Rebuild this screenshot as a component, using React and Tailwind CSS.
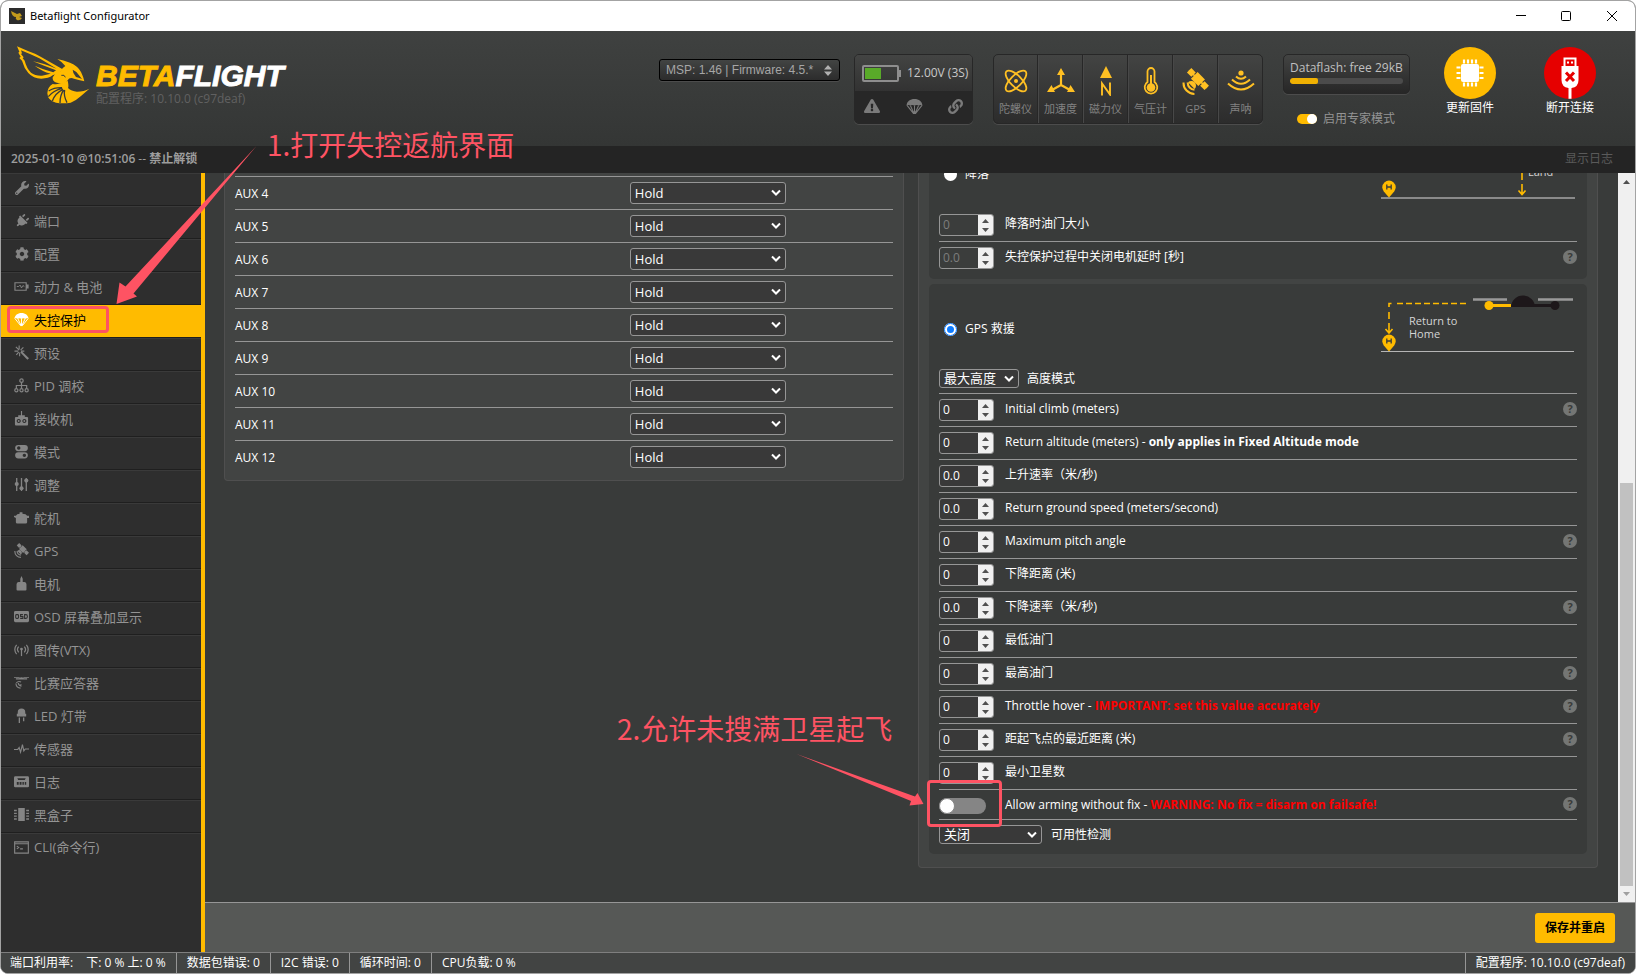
import React from 'react';
import { FaWrench, FaPlug, FaCog, FaExclamationTriangle, FaLink } from 'react-icons/fa';

const G = ({ children, className = 'size-[15px]', box = '0 0 16 16' }) => (
  <svg viewBox={box} className={className} fill="currentColor" aria-hidden="true">{children}</svg>
);

const Parachute = ({ className }) => (
  <G className={className}>
    <path d="M0.5 7.2C0.7 3.4 3.9 1 8 1s7.3 2.4 7.5 6.2c-.8-.7-2.8-.7-3.6.2-.9-1-2.9-1-3.9 0-1-1-3-1-3.9 0-.8-.9-2.8-.9-3.6-.2z" />
    <path d="M1 7l6 7.5h2L15 7M4.2 7.3L7.3 14M11.8 7.3L8.7 14M8 7.4V14" fill="none" stroke="currentColor" strokeWidth="1" />
    <path d="M6.2 12.6h3.6L8.6 15H7.4z" />
  </G>
);

const Satellite = ({ className }) => (
  <G className={className} box="0 0 26 26">
    <g transform="rotate(45 15 11)">
      <rect x="10" y="6" width="10" height="9" />
      <rect x="3" y="7.5" width="6" height="6" />
      <rect x="21" y="7.5" width="6" height="6" />
      <rect x="3" y="9.700" width="24" height="1.600" />
      <path d="M10.500 19.500a4.500 4.500 0 0 1 9 0z" />
    </g>
    <path d="M1.500 14a10.500 10.500 0 0 0 10.500 11M5.500 14a6.800 6.800 0 0 0 6.500 7" fill="none" stroke="currentColor" strokeWidth="2" />
  </G>
);

const icons = {
  wrench: <FaWrench className="size-[14px]" />,
  plug: <FaPlug className="size-[14px] rotate-45" />,
  cog: <FaCog className="size-[14px]" />,
  battery: <G><path d="M1 4h12v8H1zM14 6.5h1v3h-1z" fill="none" stroke="currentColor" strokeWidth="1.2" /><path d="M3 8h2l1.5-1.5L8 9.5 9.5 7 11 8" fill="none" stroke="currentColor" /></G>,
  chute: <Parachute className="size-[15px]" />,
  magic: <G><path d="M8 6.500l8 7.500-1.800 1.800L6.800 8z" /><path d="M5.500 5.500L2 2M5.500 4.500V.5M7 5.500L10 2.500M7.500 6.500H11M4.500 6.500H.5M5 7.500L2.500 10.500M6 8v4" fill="none" stroke="currentColor" strokeWidth="1.200" /></G>,
  tree: <G><g fill="none" stroke="currentColor" strokeWidth="1.3"><circle cx="8" cy="2.8" r="1.8" /><circle cx="2.5" cy="13" r="1.7" /><circle cx="8" cy="13" r="1.7" /><circle cx="13.5" cy="13" r="1.7" /><path d="M8 4.6v6.7M2.5 11.3V8h11v3.3" /></g></G>,
  receiver: <G><path fillRule="evenodd" d="M2 6.5h12q1 0 1 1V14q0 1.500-1 1.500H2q-1 0-1-1.500V7.500q0-1 1-1zM5 8.500a2.200 2.200 0 1 0 .1 0zM11 8.500a2.200 2.200 0 1 0 .1 0z" /><path d="M7.400 0h1.200v6H7.400zM4.500 4.500h7V7h-7z" /><circle cx="5" cy="10.700" r="1" /><circle cx="11" cy="10.700" r="1" /></G>,
  toggles: <G><path fillRule="evenodd" d="M4.500 1h7a3.300 3.300 0 0 1 0 6.600h-7a3.300 3.300 0 0 1 0-6.600zM5 2.500a1.800 1.800 0 1 0 .1 0zM4.500 8.800h7a3.300 3.300 0 0 1 0 6.600h-7a3.300 3.300 0 0 1 0-6.600zM11 10.300a1.800 1.800 0 1 0 .1 0z" /></G>,
  sliders: <G><path d="M2.200 1h1.400v14H2.200zM7.300 1h1.400v14H7.300zM12.400 1h1.400v14h-1.400z" /><circle cx="2.900" cy="7.500" r="2.200" /><circle cx="8" cy="12" r="2.200" /><circle cx="13.100" cy="3.800" r="2.200" /></G>,
  servo: <G><path d="M6 2.500h3V4q4 .3 5 2h2v2.500h-2V13q0 1.500-1.500 1.500h-9Q2 14.500 2 13V8.500L0 7.500V6h2q1-1.700 4-2z" /></G>,
  sat: <Satellite className="size-[15px]" />,
  motor: <G><path d="M8 0l1.300 3v3.500h2q2 .3 2 2.500v5.500q0 1-1 1H3.700q-1 0-1-1V9q0-2.200 2-2.500h2V3z" /></G>,
  osd: <svg viewBox="0 0 16 16" className="size-[15px]" aria-hidden="true"><rect x="0" y="2" width="16" height="12" rx="1.500" fill="currentColor" /><g fill="none" stroke="#2e2e2e" strokeWidth="1.100"><rect x="1.800" y="6" width="3" height="4" rx="1" /><path d="M9.500 6H7v2h2.500v2H6.600M11.300 6h1.500q1.500 0 1.500 2t-1.500 2h-1.500z" /></g></svg>,
  vtx: <G><g fill="none" stroke="currentColor" strokeWidth="1.300"><path d="M2.800 3a7.500 7.500 0 0 0 0 10M13.200 3a7.500 7.500 0 0 1 0 10M5 5a4.500 4.500 0 0 0 0 6M11 5a4.500 4.500 0 0 1 0 6" /><path d="M8 8v7" /></g><circle cx="8" cy="7.500" r="1.500" /></G>,
  transponder: <G><path d="M0 2h6v1H0zM10 2h6v1h-6zM5.500 3.500Q8 1.500 10.500 3.500H14v1.300H2V3.500z" /><path d="M7.500 7.500a4 4 0 0 0-5 1M8 10.500a2.500 2.500 0 0 0-2 .500M2 9q.500 4.500 5 5M4.500 8.500q.500 3 3.500 3.500" fill="none" stroke="currentColor" strokeWidth="1.200" /></G>,
  led: <G><path d="M4 6V4.500A4 4 0 0 1 12 4.500V6h1v3H3V6zM5 10h1.400v6H5zM9.600 10H11v4H9.600z" /></G>,
  pulse: <G><path d="M0 9h4l1.500-2L7 12 9 4l1.500 6.500L12 8.500h4" fill="none" stroke="currentColor" strokeWidth="1.200" /></G>,
  log: <G><path fillRule="evenodd" d="M1.500 2.500h13q1.500 0 1.500 1.500v9q0 1.200-1.500 1.200h-13Q0 14.200 0 13V4q0-1.500 1.500-1.500zM3.500 4.500l1 2h7l1-2zM3 8.500v3h2v-3zM6 8.500v3h2v-3zM9 8.500v3h1.500v-3zM11.500 8.500v3H13v-3z" /></G>,
  blackbox: <G><path d="M4.500 1h7v14h-7zM0 3h3v1.500H0zM0 6h3v1.500H0zM0 9h3v1.500H0zM0 12h3v1.500H0zM13 3h3v1.500h-3zM13 6h3v1.500h-3zM13 9h3v1.500h-3zM13 12h3v1.500h-3z" /></G>,
  cli: <G><path d="M.7 2h14.600v12H.7zM.7 4h14.600M3 6.500l2 1.500-2 1.500M6.500 9.500h3" fill="none" stroke="currentColor" strokeWidth="1.200" /></G>,
};

const nav = [
  ['设置', 'wrench'], ['端口', 'plug'], ['配置', 'cog'], ['动力 & 电池', 'battery'], ['失控保护', 'chute'],
  ['预设', 'magic'], ['PID 调校', 'tree'], ['接收机', 'receiver'], ['模式', 'toggles'], ['调整', 'sliders'],
  ['舵机', 'servo'], ['GPS', 'sat'], ['电机', 'motor'], ['OSD 屏幕叠加显示', 'osd'], ['图传(VTX)', 'vtx'],
  ['比赛应答器', 'transponder'], ['LED 灯带', 'led'], ['传感器', 'pulse'], ['日志', 'log'], ['黑盒子', 'blackbox'],
  ['CLI(命令行)', 'cli'],
];

const sensors = [
  ['陀螺仪', <svg viewBox="0 0 26 26" className="size-[26px]" aria-hidden="true"><g fill="none" stroke="#ffc023" strokeWidth="1.800"><ellipse cx="13" cy="13" rx="13.500" ry="5.600" transform="rotate(45 13 13)" /><ellipse cx="13" cy="13" rx="13.500" ry="5.600" transform="rotate(-45 13 13)" /></g><circle cx="13" cy="13" r="2" fill="#ffc023" /></svg>],
  ['加速度', <svg viewBox="0 0 28 26" className="h-[26px] w-[28px]" fill="#ffc023" aria-hidden="true"><path d="M14 4v13M14 17L4 22.500M14 17l10 5.500" stroke="#ffc023" strokeWidth="2.200" /><path d="M14 0l4 7h-8zM0 24l4.500-7 3.500 7zM28 24l-4.500-7-3.500 7z" /></svg>],
  ['磁力仪', <svg viewBox="0 0 26 30" className="h-[30px] w-[26px]" aria-hidden="true"><path d="M13 0l6 12H7z" fill="#ffc023" /><path d="M9 29.500V17.500L17 28.500V16.500" fill="none" stroke="#ffc023" strokeWidth="1.900" /></svg>],
  ['气压计', <svg viewBox="0 0 16 28" className="h-[28px] w-[16px]" aria-hidden="true"><path d="M4.500 15V4.500a3.500 3.500 0 0 1 7 0V15a6.300 6.300 0 1 1-7 0z" fill="none" stroke="#ffc023" strokeWidth="1.800" /><circle cx="8" cy="20.500" r="4.300" fill="#ffc023" /><path d="M8 8v12" stroke="#ffc023" strokeWidth="2" /></svg>],
  ['GPS', <Satellite className="size-[27px] text-[#ffc023]" />],
  ['声呐', <svg viewBox="0 0 28 22" className="h-[22px] w-[28px]" aria-hidden="true"><circle cx="14" cy="3" r="2.600" fill="#ffc023" /><path d="M9 6.500q5 4.500 10 0M5 9.500q9 8.500 18 0M1 13.500q13 12 26 0" fill="none" stroke="#ffc023" strokeWidth="2" /></svg>],
];

const Chevron = () => (
  <svg viewBox="0 0 10 7" className="pointer-events-none absolute right-[5px] top-1/2 h-[7px] w-[10px] -translate-y-1/2" aria-hidden="true">
    <path d="M1 1l4 4 4-4" fill="none" stroke="#fff" strokeWidth="2" />
  </svg>
);

function Select({ id, value, className }) {
  return (
    <span className={`relative inline-flex shrink-0 ${className}`}>
      <select id={id} defaultValue={value} className="h-full w-full appearance-none rounded-[3px] border border-[#969696] bg-[#393939] pl-[4px] text-[13px] leading-[17px] text-white">
        <option>{value}</option>
      </select>
      <Chevron />
    </span>
  );
}

const Help = () => (
  <span className="mb-[2px] ml-auto flex size-[14px] shrink-0 items-center justify-center rounded-full bg-[#747674] text-[11px] font-bold leading-[14px] text-[#393b3a]">?</span>
);

function NumberRow({ id, value, label, strong, red, help, disabled, last }) {
  return (
    <div className={`flex items-center ${last ? 'h-[32px]' : 'h-[33px] border-b border-[#969696]'}`}>
      <span className={`flex h-[22px] w-[55px] shrink-0 overflow-hidden rounded-[3px] border border-[#969696] ${disabled ? 'bg-[#3b3d3c]' : 'bg-[#393939]'}`}>
        <input id={id} type="text" inputMode="decimal" defaultValue={value} disabled={disabled} className={`w-0 flex-1 pl-[3px] text-[12px] leading-[20px] ${disabled ? 'text-[#7d7d7d]' : 'text-white'}`} />
        <span className="flex w-[15px] flex-col bg-[#f0f0f0] py-px">
          <button type="button" tabIndex={-1} aria-label={`${label} +`} className="flex flex-1 items-center justify-center"><svg viewBox="0 0 7 4" className="h-[4px] w-[7px]"><path d="M0 4L3.500 0 7 4z" fill="#505050" /></svg></button>
          <button type="button" tabIndex={-1} aria-label={`${label} -`} className="flex flex-1 items-center justify-center"><svg viewBox="0 0 7 4" className="h-[4px] w-[7px]"><path d="M0 0L3.500 4 7 0z" fill="#505050" /></svg></button>
        </span>
      </span>
      <label htmlFor={id} className="ml-[11px] pb-[2px]">
        {label}{strong && <b className={red ? 'text-[#f00]' : ''}>{strong}</b>}
      </label>
      {help && <Help />}
    </div>
  );
}

const rescue = [
  ['climb', '0', 'Initial climb (meters)', null, false, true],
  ['altitude', '0', 'Return altitude (meters) - ', 'only applies in Fixed Altitude mode', false, false],
  ['ascend', '0.0', '上升速率（米/秒)', null, false, false],
  ['speed', '0.0', 'Return ground speed (meters/second)', null, false, false],
  ['pitch', '0', 'Maximum pitch angle', null, false, true],
  ['descent', '0', '下降距离 (米)', null, false, false],
  ['descend', '0.0', '下降速率（米/秒)', null, false, true],
  ['tmin', '0', '最低油门', null, false, false],
  ['tmax', '0', '最高油门', null, false, true],
  ['hover', '0', 'Throttle hover - ', 'IMPORTANT: set this value accurately', true, true],
  ['mindist', '0', '距起飞点的最近距离 (米)', null, false, true],
  ['sats', '0', '最小卫星数', null, false, false],
];

const Pin = ({ x, y }) => (
  <g transform={`translate(${x} ${y})`}>
    <path d="M0 15.500L-5.200 9.500A6.700 6.700 0 1 1 5.200 9.500z" fill="#fb0" />
    <path d="M-2.200 2.500v5M2.200 2.500v5M-2.200 5h4.400" stroke="#393b3a" strokeWidth="1.300" />
  </g>
);

function Bee() {
  return (
    <svg viewBox="48 135 222 180" className="h-[60px] w-[74px]" aria-hidden="true">
      <g fill="#fb0">
        <path fillRule="evenodd" d="M51 139L82 152Q105 160 122 170L188 208L178 218L158 226Q146 236 124 236Q100 236 85 219Q72 204 66 182L58 174L62 170L55 158L58 155ZM63 151L66 160L63 162L71 172L68 175L74 182Q80 205 93 218Q106 228 126 227L152 221Q126 214 104 197Q130 209 160 217L168 211Q138 200 99 184Q130 190 170 206L118 175Q95 164 63 151Z" />
        <path fillRule="evenodd" d="M172 177Q190 181 210 188Q234 198 243 216Q250 230 253 244Q235 240 222 236Q208 231 203 241Q197 251 184 252L166 247Q158 241 160 230Q166 217 181 214Q187 203 196 198Q188 187 172 177ZM218 209Q229 213 237 226L246 237Q235 233 228 231Q218 220 218 209Z" />
        <path d="M158 232q6-8 12-5q-8 10 0 20q-14-3-12-15z" />
        <path d="M203 242Q207 258 204 264Q214 274 231 275Q252 275 268 266Q252 280 243 288Q228 302 212 308Q190 312 168 308Q143 302 142 280Q142 262 158 252Q180 256 203 242Z" />
      </g>
      <path d="M146 273Q163 262 186 263M145 290Q160 271 187 265M157 303Q165 280 189 268M180 309Q180 285 191 270M201 308Q190 286 194 270" fill="none" stroke="#393b3a" strokeWidth="4" />
      <path d="M184 226q10-3 12 6" fill="none" stroke="#393b3a" strokeWidth="3" />
    </svg>
  );
}

export default function App() {
  return (
    <div className="relative flex h-screen min-h-[974px] flex-col overflow-hidden rounded-[8px] border border-[#a3a3a3] bg-[#393b3a] font-['Open_Sans','Noto_Sans_CJK_SC',sans-serif] text-[12px] leading-[16px] text-white">
      {/* Title bar */}
      <div className="flex h-[30px] shrink-0 items-center bg-white pl-[8px] text-black">
        <span className="flex size-[16px] items-center justify-center bg-[#2c2c2c]">
          <svg viewBox="0 0 16 16" className="size-[16px]" aria-hidden="true"><path d="M2 3l6 3 3-1 2 3-3 1 3 1q-2 3-5 2-2-1-1-3-4 0-5-6z" fill="#c39a1c" /></svg>
        </span>
        <span className="ml-[5px] font-['Noto_Sans',sans-serif] text-[11px]">Betaflight Configurator</span>
        <div className="ml-auto flex">
          <button aria-label="最小化" className="flex h-[30px] w-[45px] items-center justify-center"><svg viewBox="0 0 10 10" className="size-[10px]"><path d="M0 4.500h10" stroke="#000" /></svg></button>
          <button aria-label="最大化" className="flex h-[30px] w-[45px] items-center justify-center"><svg viewBox="0 0 10 10" className="size-[10px]"><rect x=".5" y=".5" width="9" height="9" rx="1" fill="none" stroke="#000" /></svg></button>
          <button aria-label="关闭窗口" className="flex h-[30px] w-[47px] items-center justify-center"><svg viewBox="0 0 10 10" className="size-[10px]"><path d="M0 0l10 10M10 0L0 10" stroke="#000" /></svg></button>
        </div>
      </div>

      {/* Header */}
      <header className="flex h-[115px] shrink-0 items-start bg-gradient-to-b from-[#3f4140] to-[#343635]">
        <div className="flex pl-[15px] pt-[14px]">
          <Bee />
          <div className="ml-[6px] mt-[16px]">
            <div className="font-['Liberation_Sans',Arial,sans-serif] text-[30px] font-bold italic leading-[30px] text-white [-webkit-text-stroke:1px_currentColor]">
              <span className="text-[#fb0]">BETA</span>FLIGHT
            </div>
            <div className="leading-[16px] text-[#616161]">配置程序: 10.10.0 (c97deaf)</div>
          </div>
        </div>

        <div className="relative ml-auto mt-[28px]">
          <select aria-label="固件版本" defaultValue="a" className="h-[22px] w-[181px] appearance-none rounded-[3px] border border-black bg-gradient-to-b from-[#424443] to-[#2c2c2c] pl-[6px] font-['Liberation_Sans',sans-serif] text-[12px] text-[#a6a6a6] shadow-[0_1px_0_#4c4c4c]">
            <option value="a">MSP: 1.46 | Firmware: 4.5.*</option>
          </select>
          <svg viewBox="0 0 8 11" className="pointer-events-none absolute right-[8px] top-[6px] h-[11px] w-[8px]" aria-hidden="true"><path d="M0 4.500L4 0l4 4.500zM0 6.500L4 11l4-4.500z" fill="#b0b0b0" /></svg>
        </div>

        <div className="ml-[14px] mt-[23px] w-[119px] overflow-hidden rounded-[5px] border border-[#272727] shadow-[0_1px_0_#4c4c4c]">
          <div className="flex h-[36px] items-center bg-gradient-to-b from-[#434443] to-[#323232] pl-[7px]">
            <span className="flex h-[17px] w-[37px] rounded-[2px] border-2 border-[#8e8e8e] p-px"><span className="w-[16px] bg-[#59aa29]" /></span>
            <span className="h-[7px] w-[2px] bg-[#8e8e8e]" />
            <span className="ml-[6px] text-[12px] text-[#c8c8c8]">12.00V (3S)</span>
          </div>
          <div className="flex h-[32px] items-center justify-between bg-[#272727] px-[9px] pb-[2px] text-[#7a7a7a]">
            <FaExclamationTriangle className="size-[16px]" />
            <Parachute className="size-[17px]" />
            <FaLink className="size-[15px]" />
          </div>
        </div>

        <ul className="ml-[20px] mt-[23px] flex h-[70px] w-[270px] overflow-hidden rounded-[5px] border border-[#272727] bg-gradient-to-b from-[#434443] to-[#2c2c2c] shadow-[0_1px_0_#4c4c4c]">
          {sensors.map(([name, icon]) => (
            <li key={name} className="flex flex-1 flex-col items-center border-r border-[#272727] border-l-[#484848] last:border-r-0 not-first:border-l">
              <span className="flex h-[46px] items-center pt-[6px]">{icon}</span>
              <span className="text-[11px] leading-[16px] text-[#828282]">{name}</span>
            </li>
          ))}
        </ul>

        <div className="ml-[20px] mt-[23px] w-[127px]">
          <div className="h-[40px] rounded-[5px] border border-[#272727] bg-gradient-to-b from-[#434443] to-[#272727] px-[6px] pt-[5px] text-[#c0c0c0] shadow-[0_1px_0_#4c4c4c]">
            <div className="whitespace-nowrap leading-[16px]">Dataflash: free 29kB</div>
            <div className="mt-[2px] h-[6px] overflow-hidden rounded-[3px] bg-[#4b4b4b]"><div className="h-full w-1/4 rounded-[2px] bg-[#f0b102]" /></div>
          </div>
          <label className="mt-[17px] flex items-center pl-[14px] text-[#949494]">
            <input type="checkbox" role="switch" defaultChecked className="peer sr-only" />
            <span className="flex h-[10px] w-[20px] justify-end rounded-full bg-[#fb0]"><span className="size-[10px] rounded-full bg-white" /></span>
            <span className="ml-[6px]">启用专家模式</span>
          </label>
        </div>

        <button className="ml-[32px] mt-[16px] flex w-[56px] flex-col items-center">
          <svg viewBox="0 0 52 52" className="size-[52px]" aria-hidden="true">
            <circle cx="26" cy="26" r="26" fill="#fb0" />
            <rect x="17" y="17" width="18" height="18" rx="2" fill="#fff" />
            <path d="M20 12.500v4M24 12.500v4M28 12.500v4M32 12.500v4M20 35.500v4M24 35.500v4M28 35.500v4M32 35.500v4M12.500 20.500h4M12.500 26h4M12.500 31h4M35.500 20.500h4M35.500 26h4M35.500 31h4" stroke="#fff" strokeWidth="2.200" />
          </svg>
          <span className="text-[12px] leading-[18px]">更新固件</span>
        </button>
        <button className="ml-[44px] mr-[37px] mt-[16px] flex w-[56px] flex-col items-center">
          <svg viewBox="0 0 52 52" className="size-[52px]" aria-hidden="true">
            <circle cx="26" cy="26" r="26" fill="#e60000" />
            <path fillRule="evenodd" d="M19.500 10.500h13V19h-13zM21.500 12.500V19h9v-6.500z" fill="#fff" />
            <path d="M23 14.500h2v2h-2zM27 14.500h2v2h-2z" fill="#fff" />
            <path d="M17.500 19h17v14q0 7-7 8V51.800h-3V41q-7-1-7-8z" fill="#fff" />
            <path d="M22 25.500l8 8.500M30 25.500l-8 8.500" stroke="#e60000" strokeWidth="3" />
          </svg>
          <span className="text-[12px] leading-[18px]">断开连接</span>
        </button>
      </header>

      {/* Log bar */}
      <div className="flex h-[27px] shrink-0 items-center justify-between bg-[#242424] pb-px pl-[10px] pr-[22px] text-[#9d9d9d]">
        <span><span className="font-semibold">2025-01-10 @10:51:06</span> -- <b>禁止解锁</b></span>
        <a href="#log" className="text-[#5a5a5a]">显示日志</a>
      </div>

      <div className="flex min-h-0 flex-1">
        <nav className="w-[204px] shrink-0 border-r-4 border-[#fb0] bg-[#2e2e2e]">
          <ul>
            {nav.map(([name, icon], i) => (
              <li key={name}>
                <a
                  href={`#${icon}`}
                  className={
                    icon === 'chute'
                      ? 'flex h-[33px] items-center border-b border-[#1f1f1f] bg-[#fb0] pb-[3px] pl-[13px] text-[13px] text-black'
                      : i === nav.length - 1
                        ? 'flex h-[33px] items-center border-t border-[#3a3a3a] pb-[6px] pl-[13px] text-[13px] text-[#949494]'
                        : 'flex h-[33px] items-center border-y border-b-[#1f1f1f] border-t-[#3a3a3a] pb-[4px] pl-[13px] text-[13px] text-[#949494]'
                  }
                >
                  <span className={`flex w-[15px] justify-center ${icon === 'chute' ? 'text-white' : 'text-[#858585]'}`}>{icons[icon]}</span>
                  <span className="ml-[5px]">{name}</span>
                </a>
              </li>
            ))}
          </ul>
        </nav>

        <div className="flex min-w-0 flex-1 flex-col">
          <div className="flex min-h-0 flex-1">
            <main className="grid min-w-0 flex-1 grid-cols-2 items-start gap-[14px] overflow-hidden pl-[19px] pr-[20px]">
              <section className="rounded-b-[4px] border border-t-0 border-[#4f4f4f] bg-[#424443] px-[10px] pb-[7px]">
                <div className="h-[4px] border-b border-[#969696]" />
                {[4, 5, 6, 7, 8, 9, 10, 11, 12].map((n) => (
                  <div key={n} className="flex h-[33px] items-center border-b border-[#969696] last:h-[32px] last:border-b-0">
                    <label htmlFor={`aux${n}`} className="w-[60%] pt-px">AUX {n}</label>
                    <Select id={`aux${n}`} value="Hold" className="h-[22px] w-[156px]" />
                  </div>
                ))}
              </section>

              <section className="rounded-b-[4px] border border-t-0 border-[#4f4f4f] bg-[#424443] px-[10px] pb-[13px]">
                <div className="rounded-b-[5px] bg-[#393b3a] px-[10px] pb-[5px]">
                  <div className="-mt-[34px] flex h-[70px] items-center justify-between">
                    <label className="flex items-center gap-[8px] pl-[5px]">
                      <input type="radio" name="procedure" className="size-[13px] appearance-none rounded-full bg-white" />
                      降落
                    </label>
                    <svg viewBox="0 0 194 70" className="mr-[2px] h-[70px] w-[194px]" aria-hidden="true">
                      <path d="M0 59h194" stroke="#8a8a8a" strokeWidth="2" />
                      <path d="M141 28v13M141 45v10M137.500 51.500l3.500 4 3.500-4" fill="none" stroke="#fb0" strokeWidth="1.600" />
                      <Pin x={8} y={43} />
                      <text x="147" y="37" fill="#d5d5d5" fontSize="11">Land</text>
                    </svg>
                  </div>
                  <NumberRow id="landThrottle" value="0" label="降落时油门大小" disabled />
                  <NumberRow id="offDelay" value="0.0" label="失控保护过程中关闭电机延时 [秒]" disabled help last />
                </div>

                <div className="mt-[5px] rounded-[5px] bg-[#393b3a] px-[10px] pb-[5px] pt-[10px]">
                  <div className="flex h-[70px] items-center justify-between">
                    <label className="flex items-center gap-[8px] pl-[5px]">
                      <input type="radio" name="procedure" defaultChecked className="size-[13px] appearance-none rounded-full border-[3px] border-white bg-[#0d7bff] outline-1 -outline-offset-1 outline-[#0d7bff]" />
                      GPS 救援
                    </label>
                    <svg viewBox="0 0 194 70" className="mr-[2px] h-[70px] w-[194px]" aria-hidden="true">
                      <path d="M0 57.500h193" stroke="#b5b5b5" strokeWidth="1" />
                      <path d="M8 13V9.500h4M16 9.500h72" fill="none" stroke="#fb0" strokeWidth="1.600" strokeDasharray="6 3" />
                      <path d="M8 18v7M8 29v10M4.500 35l3.500 4 3.500-4" fill="none" stroke="#fb0" strokeWidth="1.600" />
                      <Pin x={8} y={42} />
                      <path d="M92 5.500h34M157 5.500h35" stroke="#9a9a9a" strokeWidth="2.600" />
                      <path d="M130 13a11.500 11 0 0 1 24 0z" fill="#1d171a" />
                      <path d="M140 11.500h34" stroke="#1d171a" strokeWidth="3" />
                      <path d="M108 11.500h22" stroke="#fb0" strokeWidth="3" />
                      <circle cx="108" cy="11.500" r="4.500" fill="#fb0" />
                      <circle cx="174" cy="11.500" r="4.500" fill="#1d171a" />
                      <text x="28" y="31" fill="#d5d5d5" fontSize="11">Return to</text>
                      <text x="28" y="44" fill="#d5d5d5" fontSize="11">Home</text>
                    </svg>
                  </div>
                  <div className="flex h-[30px] items-center border-b border-[#969696]">
                    <Select id="altMode" value="最大高度" className="h-[19px] w-[80px]" />
                    <label htmlFor="altMode" className="ml-[8px]">高度模式</label>
                  </div>
                  {rescue.map(([id, value, label, strong, red, help]) => (
                    <NumberRow key={id} id={id} value={value} label={label} strong={strong} red={red} help={help} />
                  ))}
                  <div className="flex h-[30px] items-center border-b border-[#969696]">
                    <span className="flex w-[55px] pt-[2px]">
                      <input id="arming" type="checkbox" role="switch" className="h-[16px] w-[47px] appearance-none rounded-full bg-[#858585] before:block before:size-[16px] before:rounded-full before:border before:border-[#858585] before:bg-white" />
                    </span>
                    <label htmlFor="arming" className="ml-[11px]">
                      Allow arming without fix - <b className="text-[#f00]">WARNING: No fix = disarm on failsafe!</b>
                    </label>
                    <Help />
                  </div>
                  <div className="flex h-[29px] items-center">
                    <Select id="sanity" value="关闭" className="h-[19px] w-[103px]" />
                    <label htmlFor="sanity" className="ml-[9px]">可用性检测</label>
                  </div>
                </div>
              </section>
            </main>

            {/* Scrollbar */}
            <div className="flex w-[17px] shrink-0 flex-col items-center bg-[#f0f0f0]" aria-hidden="true">
              <svg viewBox="0 0 7 4" className="my-[7px] h-[4px] w-[7px]"><path d="M0 4L3.500 0 7 4z" fill="#505050" /></svg>
              <div className="flex w-full flex-1 flex-col justify-end px-[2px]"><div className="h-[58%] bg-[#c1c1c1]" /></div>
              <svg viewBox="0 0 7 4" className="my-[6px] h-[4px] w-[7px]"><path d="M0 0L3.500 4 7 0z" fill="#a0a0a0" /></svg>
            </div>
          </div>

          <div className="flex h-[50px] shrink-0 items-center justify-end border-t border-[#969696] bg-[#565856] pr-[20px]">
            <button className="h-[30px] rounded-[3px] bg-[#fb0] px-[10px] font-bold text-black">保存并重启</button>
          </div>
        </div>
      </div>

      {/* Status bar */}
      <footer className="flex h-[21px] shrink-0 items-stretch border-t border-[#7f7f7f] bg-[#424443] pl-[9px] leading-[20px]">
        <span className="border-r border-[#969696] pr-[10px]">端口利用率:<span className="ml-[13px]">下: 0 % 上: 0 %</span></span>
        <span className="border-r border-[#969696] px-[10px]">数据包错误: 0</span>
        <span className="border-r border-[#969696] px-[10px]">I2C 错误: 0</span>
        <span className="border-r border-[#969696] px-[10px]">循环时间: 0</span>
        <span className="px-[10px]">CPU负载: 0 %</span>
        <span className="ml-auto border-l border-[#969696] px-[10px]">配置程序: 10.10.0 (c97deaf)</span>
      </footer>

      {/* Annotations */}
      <div className="pointer-events-none absolute left-[6px] top-[305px] h-[27px] w-[102px] rounded-[4px] border-[3px] border-[#fe5363]" />
      <div className="pointer-events-none absolute left-[926px] top-[779px] h-[47px] w-[75px] rounded-[4px] border-[3px] border-[#fe5363]" />
      <svg viewBox="0 0 150 160" className="pointer-events-none absolute left-[114px] top-[144px] h-[160px] w-[150px]" aria-hidden="true">
        <path d="M141.500 1L10.500 141.500 4.500 137.500 1.500 159 22 151.500 18.500 148.500z" fill="#fe5363" />
      </svg>
      <svg viewBox="0 0 130 55" className="pointer-events-none absolute left-[795px] top-[752px] h-[55px] w-[130px]" aria-hidden="true">
        <path d="M.5 1L115 48 113.500 52.500 127.500 51 121.500 40 119 43.500z" fill="#fe5363" />
      </svg>
      <p className="pointer-events-none absolute left-[266px] top-[123px] whitespace-nowrap font-['Noto_Sans_CJK_SC',sans-serif] text-[28px] leading-[40px] text-[#fe5363]">1.打开失控返航界面</p>
      <p className="pointer-events-none absolute left-[616px] top-[707px] whitespace-nowrap font-['Noto_Sans_CJK_SC',sans-serif] text-[28px] leading-[40px] text-[#fe5363]">2.允许未搜满卫星起飞</p>
    </div>
  );
}
